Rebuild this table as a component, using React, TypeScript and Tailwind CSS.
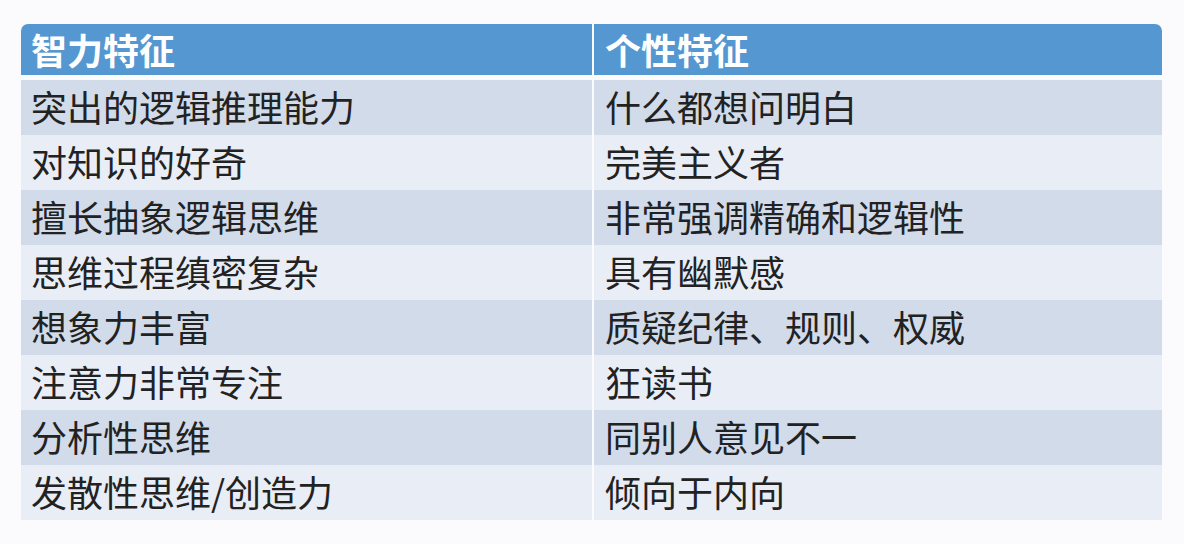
import React from "react";

const rows: [string, string][] = [
  ["突出的逻辑推理能力", "什么都想问明白"],
  ["对知识的好奇", "完美主义者"],
  ["擅长抽象逻辑思维", "非常强调精确和逻辑性"],
  ["思维过程缜密复杂", "具有幽默感"],
  ["想象力丰富", "质疑纪律、规则、权威"],
  ["注意力非常专注", "狂读书"],
  ["分析性思维", "同别人意见不一"],
  ["发散性思维/创造力", "倾向于内向"],
];

const font = { fontFamily: '"Noto Sans CJK SC", "Noto Sans", sans-serif' };

export default function App() {
  return (
    <div className="w-full h-[544px] bg-[#fbfbfd] pt-[24px] pl-[21px]" style={font}>
      <div className="w-[1141px]">
        {/* header */}
        <div className="grid grid-cols-[571px_1fr] gap-x-[2px] h-[51px] rounded-t-[7px] overflow-hidden">
          <div className="bg-[#5597d0] flex items-center pl-[10px] pb-[2px] text-white text-[36px] font-bold leading-none">
            智力特征
          </div>
          <div className="bg-[#5597d0] flex items-center pl-[11px] pb-[2px] text-white text-[36px] font-bold leading-none">
            个性特征
          </div>
        </div>

        {/* body */}
        <div className="mt-[5px] grid grid-cols-[571px_1fr] gap-x-[2px]">
          {rows.map(([a, b], i) => {
            const bg = i % 2 === 0 ? "bg-[#d1dbea]" : "bg-[#e9edf6]";
            return (
              <React.Fragment key={i}>
                <div className={`${bg} h-[55px] flex items-center pl-[10px] pb-[4px] text-[36px] text-[#222] leading-none`}>
                  {a}
                </div>
                <div className={`${bg} h-[55px] flex items-center pl-[11px] pb-[4px] text-[36px] text-[#222] leading-none`}>
                  {b}
                </div>
              </React.Fragment>
            );
          })}
        </div>
      </div>
    </div>
  );
}
